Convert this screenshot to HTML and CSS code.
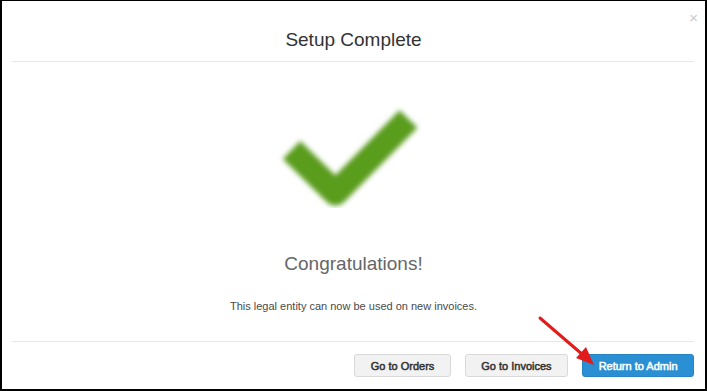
FILE: index.html
```html
<!DOCTYPE html>
<html>
<head>
<meta charset="utf-8">
<link rel="stylesheet" href="styles.css">
</head>
<body>
<div class="modal">
  <span class="close">&times;</span>
  <div class="header">
    <h1 class="title">Setup Complete</h1>
  </div>
  <hr class="rule rule-top">
  <div class="content">
    <svg class="check" width="160" height="124" viewBox="0 0 160 124">
      <defs>
        <filter id="soft" x="-20%" y="-20%" width="140%" height="140%">
          <feGaussianBlur stdDeviation="2.6"/>
        </filter>
      </defs>
      <path d="M17.5 58 L61.5 101 L134.5 27" fill="none" stroke="#5a9c1c" stroke-width="25" stroke-linejoin="round" filter="url(#soft)"/>
    </svg>
    <h2 class="congrats">Congratulations!</h2>
    <p class="message">This legal entity can now be used on new invoices.</p>
  </div>
  <hr class="rule rule-bottom">
  <div class="footer">
    <button class="btn">Go to Orders</button>
    <button class="btn">Go to Invoices</button>
    <button class="btn btn-primary">Return to Admin</button>
  </div>
  <svg class="arrow" width="80" height="70" viewBox="0 0 80 70">
    <line x1="8" y1="8" x2="51" y2="45" stroke="#e21c1c" stroke-width="3" stroke-linecap="round"/>
    <polygon points="62,55 44,48 54,37" fill="#e21c1c"/>
  </svg>
</div>
</body>
</html>
```
FILE: styles.css
```css
html, body {
  margin: 0;
  padding: 0;
  background: #ffffff;
}

.modal {
  position: relative;
  box-sizing: border-box;
  width: 707px;
  height: 391px;
  border-style: solid;
  border-color: #000;
  border-width: 1px 2px 2px 2px;
  background: #fff;
  font-family: "Liberation Sans", Arial, sans-serif;
  display: flex;
  flex-direction: column;
}

.close {
  position: absolute;
  top: 9px;
  right: 7px;
  font-size: 15px;
  line-height: 16px;
  color: #c9c9c9;
}

.header {
  padding-top: 28px;
  text-align: center;
}

.title {
  margin: 0;
  font-size: 19px;
  line-height: 22px;
  font-weight: normal;
  color: #333;
}

.rule {
  border: 0;
  height: 1px;
  background: #e6e6e6;
  margin: 0 11px 0 10px;
}

.rule-top {
  margin-top: 10px;
}

.content {
  display: flex;
  flex-direction: column;
  align-items: center;
  padding-top: 30px;
}

.check {
  display: block;
}

.congrats {
  margin: 37px 0 0;
  font-size: 19px;
  line-height: 22px;
  font-weight: normal;
  color: #666;
}

.message {
  margin: 24px 0 0;
  font-size: 11px;
  line-height: 14px;
  color: #4a4a4a;
}

.rule-bottom {
  margin-top: 28px;
}

.footer {
  display: flex;
  justify-content: flex-end;
  gap: 14px;
  padding: 12px 11px 0 0;
}

.btn {
  box-sizing: border-box;
  height: 23px;
  padding: 0 15.5px;
  border: 1px solid #d9d9d9;
  border-radius: 3px;
  background: #f2f2f2;
  color: #333;
  font-family: "Liberation Sans", Arial, sans-serif;
  font-size: 11px;
  font-weight: normal;
  -webkit-text-stroke: 0.5px currentColor;
}

.btn-primary {
  background: #2b8fd3;
  border-color: #2784c4;
  color: #fff;
}

.arrow {
  position: absolute;
  left: 530px;
  top: 309px;
}
```
